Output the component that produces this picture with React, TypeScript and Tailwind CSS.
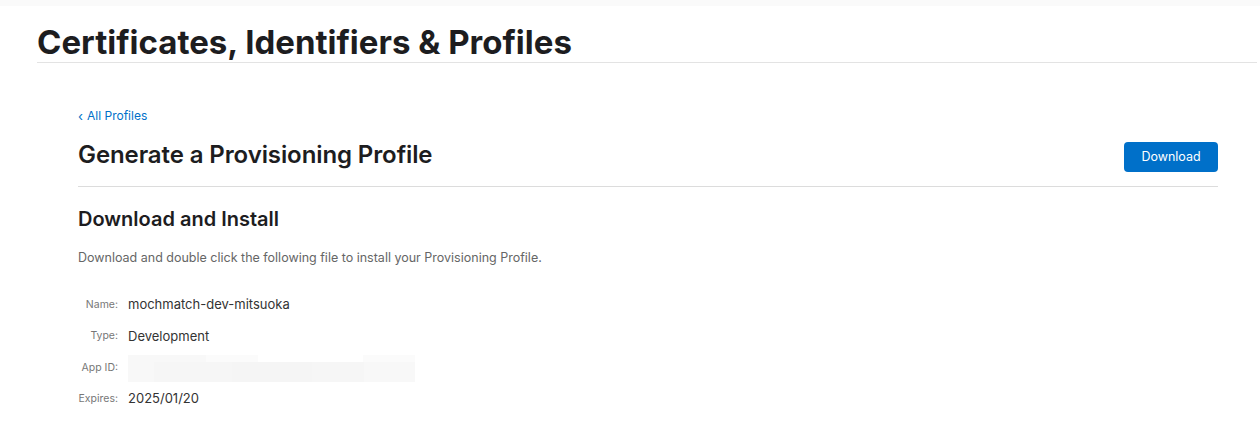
import React from 'react';

const rows = [
  { label: 'Name:', value: 'mochmatch-dev-mitsuoka' },
  { label: 'Type:', value: 'Development' },
  { label: 'App ID:', value: null },
  { label: 'Expires:', value: '2025/01/20' },
];

// blurred App ID
const Redacted = () => (
  <div className="flex flex-col w-[287px] mt-[2px]">
    <div className="flex h-[7px]">
      <div className="w-[78px] bg-[#f8f8f8]" />
      <div className="w-[52px] bg-[#fbfbfb]" />
      <div className="w-[105px]" />
      <div className="w-[52px] bg-[#fbfbfb]" />
    </div>
    <div className="flex h-[20px]">
      <div className="w-[26px] bg-[#f8f8f8]" />
      <div className="w-[78px] bg-[#f6f6f6]" />
      <div className="w-[80px] bg-[#f5f5f5]" />
      <div className="w-[52px] bg-[#f6f6f6]" />
      <div className="w-[51px] bg-[#f8f8f8]" />
    </div>
  </div>
);

export default function App() {
  return (
    <div className="min-h-[440px] bg-white text-[#1d1d1f] font-['Inter','Helvetica_Neue',sans-serif]">
      <div className="h-[6px] bg-[#fafafa]" />
      <div className="pl-[37px] pr-[3px]">
        <h1 className="pt-[17px] pb-[1px] text-[33px] font-bold leading-[38px] tracking-[0px] border-b border-[#e3e3e3]">
          Certificates, Identifiers &amp; Profiles
        </h1>
        <div className="pl-[41px] pr-[39px] pt-[45px]">
          <a href="#" className="flex items-center gap-[4px] text-[12px] leading-[16px] text-[#0070c9]">
            <span className="text-[13px]">‹</span> All Profiles
          </a>
          <div className="flex items-center justify-between mt-[13px] pb-[14px] border-b border-[#dcdcdc]">
            <h2 className="text-[24px] font-semibold leading-[30px] tracking-[-0.1px]">Generate a Provisioning Profile</h2>
            <button className="w-[94px] h-[30px] rounded-[4px] bg-[#0070c9] text-white text-[12.5px] mt-[5px]">
              Download
            </button>
          </div>
          <h3 className="mt-[19px] text-[20px] font-semibold leading-[26px]">Download and Install</h3>
          <p className="mt-[18px] text-[12.5px] leading-[16px] text-[#666]">
            Download and double click the following file to install your Provisioning Profile.
          </p>
          <div className="mt-[28px] flex flex-col gap-[9.3px]">
            {rows.map(r => (
              <div key={r.label} className="flex items-center h-[22px]">
                <span className="w-[40px] text-right text-[10.5px] text-[#777]">{r.label}</span>
                <span className="ml-[10px] text-[13px] text-[#333]">
                  {r.value ?? <Redacted />}
                </span>
              </div>
            ))}
          </div>
        </div>
      </div>
    </div>
  );
}
